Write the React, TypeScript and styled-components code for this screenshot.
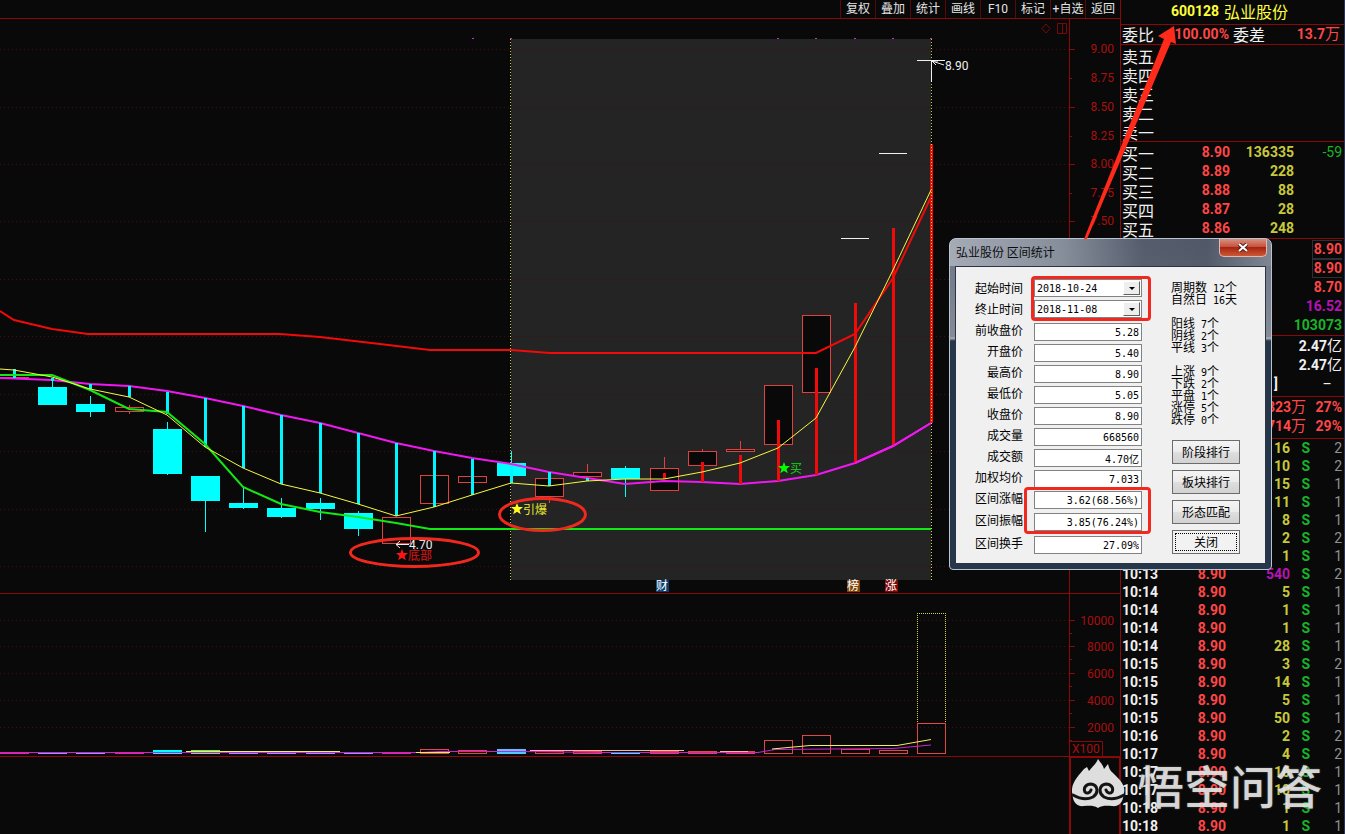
import React from "react";
import styled, { createGlobalStyle, css } from "styled-components";

const LINE = "#8a0808";
const AXIS = "#a80f0f";
const RED = "#ff4646";
const YELLOW = "#c8c83c";
const GREEN = "#18b428";
const PURPLE = "#b414b4";
const CJK = '"Noto Sans CJK SC", sans-serif';

const GlobalStyle = createGlobalStyle`
  * { box-sizing: border-box; }
  body { margin: 0; background: #090909; overflow: hidden; }
`;

const Screen = styled.div`
  position: relative;
  display: grid;
  grid-template-columns: minmax(0, 1fr) 225px;
  height: 100vh;
  overflow: hidden;
  background: #090909;
  color: #f0f0f0;
  font-family: Roboto, ${CJK};
  font-size: 14px;
`;

/* ---------- chart side ---------- */

const ChartSide = styled.main`
  display: flex;
  flex-direction: column;
  min-width: 0;
`;

const Toolbar = styled.nav`
  display: flex;
  justify-content: flex-end;
  height: 19px;
  flex: none;
  border-bottom: 1px solid ${LINE};
`;

const ToolButton = styled.button`
  width: 35px;
  padding: 0;
  border: 0;
  border-left: 1px solid #5a0808;
  background: none;
  color: #e4e4e4;
  font: 12px/16px Roboto, ${CJK};
  white-space: nowrap;
`;

const Plot = styled.svg`
  display: block;
  width: 100%;
  flex: none;
  font-family: Roboto, ${CJK};
  font-size: 12px;
`;

const Footer = styled.div`
  display: grid;
  grid-template-columns: 1fr 51px;
  flex: 1;
  min-height: 0;
`;

const FooterCell = styled.div`
  border: 0 solid ${LINE};
  border-width: 1px 1px 0 2px;
`;

/* ---------- quote side ---------- */

const QuoteSide = styled.aside`
  display: flex;
  flex-direction: column;
  min-width: 0;
  border-left: 1px solid ${LINE};
  border-right: 1px solid #2c3654;
`;

const Title = styled.h1`
  display: flex;
  justify-content: center;
  gap: 5px;
  margin: 0;
  padding-right: 6px;
  height: 25px;
  flex: none;
  border-bottom: 1px solid ${LINE};
  color: #ffff38;
  font-size: 14px;
  line-height: 23px;
`;

const Cjk = styled.span`
  display: block;
  font: 16px/18px ${CJK};
`;

const TitleName = styled(Cjk)`
  line-height: 22px;
`;

const Ratio = styled.div`
  display: grid;
  grid-template-columns: 32px 1fr 32px 1fr;
  column-gap: 4px;
  height: 20px;
  flex: none;
  padding: 0 4px 0 1px;
  border-bottom: 1px solid ${LINE};
  line-height: 19px;
`;

const Num = styled.span`
  color: ${RED};
  font-weight: 700;
  text-align: right;
  white-space: nowrap;
`;

const Table = styled.table<{ $rows: number; $top?: number; $bottom?: number; $last?: boolean }>`
  width: 100%;
  flex: none;
  border-collapse: separate;
  border-spacing: 0;
  table-layout: fixed;
  padding: ${(p) => p.$top || 0}px 0 ${(p) => p.$bottom || 0}px;
  ${(p) => !p.$last && css`border-bottom: 1px solid ${LINE};`}
  td {
    height: ${(p) => p.$rows}px;
    padding: 0;
    line-height: 17px;
    white-space: nowrap;
    overflow: hidden;
  }
`;

const Cell = styled.td<{ $c?: string; $plain?: boolean; $left?: boolean; $end?: boolean }>`
  color: ${(p) => p.$c || "#f0f0f0"};
  font-weight: ${(p) => (p.$plain ? 400 : 700)};
  text-align: ${(p) => (p.$left ? "left" : "right")};
  && { padding-left: ${(p) => (p.$left ? 1 : 0)}px; padding-right: ${(p) => (p.$end ? 2 : 0)}px; }
`;

const Unit = styled.span`
  font-size: 15px;
  font-weight: 400;
`;

const Boxed = styled.span`
  display: block;
  width: 30px;
  margin-left: auto;
  border: 1px solid #2e2e34;
  border-width: 1px 0 1px 1px;
`;

/* ---------- statistics dialog ---------- */

const Dialog = styled.section`
  position: absolute;
  top: 238px;
  right: 73px;
  width: 323px;
  height: 332px;
  display: flex;
  flex-direction: column;
  padding: 0 5px 5px;
  border: 1px solid #b9c4d0;
  border-radius: 7px 7px 4px 4px;
  background:
    linear-gradient(90deg, rgba(168, 174, 184, 0.95) 0, rgba(140, 148, 160, 0.8) 35%, rgba(70, 78, 96, 0.6) 60%, rgba(52, 60, 78, 0.5) 80%, rgba(130, 138, 150, 0.8) 100%) 0 0 / 100% 27px no-repeat,
    linear-gradient(180deg, #6c7482 0, #858c98 98px, #b4bac2 99px, #27374b 102px, #27374b 100%);
  color: #000;
`;

const DialogBar = styled.header`
  display: flex;
  justify-content: space-between;
  height: 27px;
  flex: none;
`;

const DialogTitle = styled.h2`
  margin: 0;
  padding-left: 1px;
  font: 12px/26px ${CJK};
  color: #0c0c10;
`;

const CloseButton = styled.button`
  display: grid;
  place-items: center;
  width: 48px;
  height: 18px;
  margin-right: -1px;
  padding: 0;
  border: 1px solid #e4b8ae;
  border-top: 0;
  border-radius: 0 0 5px 5px;
  background: linear-gradient(#d8907e 0, #c4523e 46%, #a82410 50%, #cc5836 100%);
`;

const DialogBody = styled.div`
  display: grid;
  grid-template-columns: 186px 1fr;
  column-gap: 12px;
  flex: 1;
  padding-top: 12px;
  border: 1px solid #2a3442;
  background: #f0f0f0;
  font: 12px/18px ${CJK};
`;

const Fields = styled.div`
  display: flex;
  flex-direction: column;
`;

const Field = styled.label<{ $gap: number; $line: number }>`
  display: grid;
  grid-template-columns: 67px 108px;
  column-gap: 11px;
  height: 18px;
  margin-bottom: ${(p) => p.$gap}px;
  line-height: ${(p) => p.$line}px;
  text-align: right;
`;

const mono = css`
  font: 10px/16px "DejaVu Sans Mono", "Noto Sans CJK SC", monospace;
`;

const ValueBox = styled.input`
  width: 108px;
  height: 18px;
  padding: 1px 2px 0 0;
  border: 1px solid #828282;
  border-radius: 0;
  background: #fff;
  color: #000;
  text-align: right;
  ${mono}
`;

const SelectWrap = styled.span`
  display: grid;
  grid-template-columns: 1fr 18px;
  align-items: center;
  height: 18px;
  border: 1px solid #828282;
  background: #fff;
`;

const DateSelect = styled.select`
  grid-area: 1 / 1 / 2 / 3;
  width: 100%;
  height: 16px;
  padding: 1px 0 0 2px;
  appearance: none;
  border: 0;
  border-radius: 0;
  background: none;
  color: #000;
  ${mono}
`;

const Drop = styled.span`
  grid-area: 1 / 2;
  display: grid;
  place-items: center;
  width: 17px;
  height: 14px;
  border: 1px solid #fff;
  border-right-color: #606060;
  border-bottom-color: #606060;
  background: #eee;
  pointer-events: none;
  &::after {
    content: "";
    border: 3px solid transparent;
    border-top-color: #000;
    border-bottom: 0;
  }
`;

const Summary = styled.div`
  padding: 2px 0 0 17px;
`;

const SummaryGroup = styled.div`
  margin-bottom: 12px;
`;

const SummaryLine = styled.p`
  margin: 0;
  line-height: 12px;
  height: 12px;
  white-space: pre;
`;

const Count = styled.span`
  font: 10px/12px "DejaVu Sans Mono", monospace;
`;

const Actions = styled.div`
  display: flex;
  flex-direction: column;
  gap: 6px;
  padding: 3px 0 0 1px;
`;

const ActionButton = styled.button<{ $focus?: boolean }>`
  width: 68px;
  height: 24px;
  padding: 0;
  border: 1px solid #6c6c6c;
  border-radius: 0;
  background: linear-gradient(#f4f4f4 0, #ececec 48%, #dedede 52%, #d2d2d2 100%);
  color: #000;
  font: 12px/20px ${CJK};
  ${(p) => p.$focus && css`
    background: #f2f2f2;
    outline: 1px dotted #000;
    outline-offset: -4px;
  `}
`;

const Highlight = styled.div<{ $top: number; $left: number; $w: number; $h: number }>`
  position: absolute;
  top: ${(p) => p.$top}px;
  left: ${(p) => p.$left}px;
  width: ${(p) => p.$w}px;
  height: ${(p) => p.$h}px;
  border: 3px solid #f0281e;
  border-radius: 4px;
  pointer-events: none;
`;

const Arrow = styled.svg`
  position: absolute;
  top: 24px;
  right: 165px;
  pointer-events: none;
`;

const Watermark = styled.div`
  position: absolute;
  top: 757px;
  right: 23px;
  display: flex;
  align-items: center;
  gap: 13px;
  color: rgba(232, 232, 232, 0.88);
  font: 500 46px/54px ${CJK};
  pointer-events: none;
  text-shadow: 0 0 2px rgba(150, 150, 150, 0.6);
`;

/* ---------- data ---------- */

const tools = ["复权", "叠加", "统计", "画线", "F10", "标记", "+自选", "返回"];

const sells = ["卖五", "卖四", "卖三", "卖二", "卖一"];
const buys = [
  ["买一", "8.90", "136335", "-59"],
  ["买二", "8.89", "228", ""],
  ["买三", "8.88", "88", ""],
  ["买四", "8.87", "28", ""],
  ["买五", "8.86", "248", ""],
];

const ticks: [string, string, string][] = [
  ["", "16", "2"], ["", "10", "2"], ["", "15", "1"], ["", "11", "1"], ["", "8", "1"],
  ["", "2", "2"], ["", "1", "1"], ["10:13", "540", "2"], ["10:14", "5", "1"],
  ["10:14", "1", "1"], ["10:14", "1", "1"], ["10:14", "28", "1"], ["10:15", "3", "2"],
  ["10:15", "14", "1"], ["10:15", "5", "1"], ["10:15", "50", "1"], ["10:16", "2", "2"],
  ["10:17", "4", "2"], ["10:17", "10", "1"], ["10:17", "10", "1"], ["10:18", "1", "1"],
  ["10:18", "1", "1"],
];

const fields: [string, string, number][] = [
  ["前收盘价", "5.28", 3], ["开盘价", "5.40", 3], ["最高价", "8.90", 3], ["最低价", "5.05", 3],
  ["收盘价", "8.90", 3], ["成交量", "668560", 3], ["成交额", "4.70亿", 3], ["加权均价", "7.033", 3],
  ["区间涨幅", "3.62(68.56%)", 4], ["区间振幅", "3.85(76.24%)", 5], ["区间换手", "27.09%", 0],
];

const summary = [
  [["周期数", " 12", "个"], ["自然日", " 16", "天"]],
  [["阳线", " 7", "个"], ["阴线", " 2", "个"], ["平线", " 3", "个"]],
  [["上涨", " 9", "个"], ["下跌", " 2", "个"], ["平盘", " 1", "个"], ["涨停", " 5", "个"], ["跌停", " 0", "个"]],
];

// x centre, body top, body bottom, wick top, wick bottom
type Candle = [number, number, number, number, number];
const falling: Candle[] = [
  [52, 387, 405, 378, 405], [90, 404, 412, 396, 417], [167, 429, 474, 422, 475],
  [205, 476, 501, 476, 532], [243, 503, 508, 488, 509], [281, 508, 517, 498, 518],
  [320, 503, 509, 498, 520], [358, 513, 529, 511, 536], [511, 463, 476, 451, 478],
  [625, 468, 479, 466, 497],
];
const rising: Candle[] = [
  [129, 407, 411, 405, 414], [396, 517, 543, 517, 543], [434, 475, 503, 475, 503],
  [472, 476, 482, 472, 486], [549, 478, 496, 478, 503], [587, 472, 476, 464, 476],
  [664, 468, 490, 457, 490], [702, 451, 465, 449, 465], [740, 449, 451, 441, 451],
  [778, 385, 444, 385, 444], [816, 315, 392, 315, 392],
];
const coolBars = [
  [14, 369, 378], [52, 378, 381], [90, 384, 389], [129, 386, 397], [167, 392, 414],
  [205, 398, 447], [243, 406, 468], [281, 415, 484], [320, 423, 493], [358, 433, 504],
  [396, 443, 516], [434, 451, 507], [472, 459, 495], [511, 466, 483], [549, 472, 486],
  [587, 478, 481],
];
const hotBars = [
  [664, 473, 479], [702, 462, 482], [740, 455, 484], [778, 420, 481], [816, 368, 475],
  [855, 303, 463], [893, 228, 446], [931, 144, 423],
];
const redLine = "0,311 14,320 52,329 88,334 280,334 320,337 380,344 430,350 511,350 550,353 816,353 855,334 893,278 931,197";
const yellowLine = "0,369 14,370 52,377 90,389 129,397 167,415 205,447 243,468 281,484 320,493 358,504 396,516 434,507 472,495 511,483 549,486 587,481 625,479 664,479 702,472 740,463 778,448 816,418 855,347 893,270 931,190";
const magentaLine = "0,378 52,380 90,384 129,386 167,391 205,398 243,406 281,415 320,423 358,433 396,443 434,451 472,458 511,464 549,472 587,478 625,484 664,481 702,482 740,484 778,481 816,475 855,463 893,446 931,423";
const greenLine = "0,375 52,375 90,390 129,409 167,412 205,444 243,487 281,504 320,512 358,517 396,523 430,529 931,529";

const priceTicks: [number, string][] = [
  [49, "9.00"], [78, "8.75"], [107, "8.50"], [136, "8.25"], [164, "8.00"], [193, "7.75"], [221, "7.50"],
];
const gridRows = [49, 107, 164, 221, 279, 336, 394, 451, 509, 566];
const volumeTicks: [number, string][] = [
  [620, "10000"], [646, "8000"], [673, "6000"], [700, "4000"], [727, "2000"],
];
const volumeCandles: [number, number, string][] = [
  [14, 752, "#e0289a"], [52, 752, "#8c9cff"], [90, 752, "#8c9cff"], [129, 752, "#e0289a"],
  [167, 750, "#00ffff"], [205, 750, "#6ee86e"], [243, 752, "#8c9cff"], [281, 752, "#8c9cff"],
  [320, 752, "#8c9cff"], [358, 752, "#8c9cff"], [396, 752, "#e0289a"], [511, 749, "#50c8ff"],
  [625, 752, "#00ffff"],
];
const volumeHollow = [
  [434, 749], [472, 750], [549, 751], [587, 751], [664, 751], [702, 751], [740, 751],
  [778, 740], [816, 735], [855, 749], [893, 750], [931, 723],
];

const starPath = "M0,-6 L1.6,-1.9 6,-1.9 2.5,0.9 3.8,5.3 0,2.7 -3.8,5.3 -2.5,0.9 -6,-1.9 -1.6,-1.9Z";

/* ---------- drawings ---------- */

const PriceChart = () => (
  <Plot viewBox="0 19 1120 575" role="img" aria-label="K线图">
    <rect x="511" y="39" width="420" height="541" fill="#242424" />
    {gridRows.map((y) => (
      <path key={y} d={`M0 ${y + 0.5}H1069`} stroke="#400c0c" strokeDasharray="1 3" />
    ))}
    <path d="M1069.5 19V593" stroke={LINE} />
    {gridRows.map((y) => (
      <path key={y} d={`M1070 ${y + 0.5}h5M1070 ${y + 29.5}h2`} stroke={LINE} />
    ))}
    {priceTicks.map(([y, t]) => (
      <text key={t} x="1114" y={y + 4} textAnchor="end" fill={AXIS}>{t}</text>
    ))}
    <path d="M1046 24l4 4.5-4 4.5-4-4.5zM1057.500 23.500h9v10h-9zM1062.500 23.500v10" fill="none" stroke="#7a0808" />
    {[473, 511, 778, 816, 855, 893, 931].map((x) => (
      <rect key={x} x={x - 1} y="38" width="2" height="1" fill="#c832c8" />
    ))}
    <path d="M510.500 39V580M931.500 39V144" stroke="#c8c83c" strokeDasharray="1 2" />

    {rising.map(([x, t, b, wt, wb]) => (
      <g key={x} stroke="#e04040" fill="#090909">
        <path d={`M${x + 0.5} ${wt}V${t}M${x + 0.5} ${b}V${wb}`} />
        <rect x={x - 13.5} y={t + 0.5} width="28" height={b - t} />
      </g>
    ))}
    <path d="M0 377.500H29" stroke="#e04040" />
    {falling.map(([x, t, b, wt, wb]) => (
      <g key={x} fill="#00ffff">
        <rect x={x} y={wt} width="1" height={wb - wt} />
        <rect x={x - 14} y={t} width="29" height={b - t} />
      </g>
    ))}
    <polyline points={magentaLine} fill="none" stroke="#f018f0" strokeWidth="2" />
    {coolBars.map(([x, t, b]) => (
      <rect key={x} x={x - 1} y={t} width="3" height={b - t} fill="#00f6ff" />
    ))}
    {hotBars.map(([x, t, b]) => (
      <rect key={x} x={x - 1} y={t} width="3" height={b - t} fill="#f00a0a" />
    ))}
    <polyline points={greenLine} fill="none" stroke="#14e814" strokeWidth="2" />
    <polyline points={redLine} fill="none" stroke="#f00a0a" strokeWidth="2" />
    <polyline points={yellowLine} fill="none" stroke="#f8f840" />
    <polyline points="855,463 893,446 931,423" fill="none" stroke="#f018f0" strokeWidth="2" />
    <path d="M931.500 144V580" stroke="#d8d850" strokeDasharray="1 2" />

    <path d="M841 238.500h28M879 153.500h28M917 60.500h28M931.500 60V82M932 61l12 4M932 61l6 0M932 61l4 4" stroke="#f0f0f0" fill="none" />
    <text x="945" y="70" fill="#f0f0f0">8.90</text>
    <path d="M409 544.500H396M400 541l-4 3.500 4 3.500" stroke="#f0f0f0" fill="none" />
    <text x="409" y="549" fill="#f0f0f0">4.70</text>

    <path transform="translate(402 555)" d={starPath} fill="#ff1414" />
    <text x="408" y="560" fill="#e01414">底部</text>
    <path transform="translate(517 509)" d={starPath} fill="#ffff20" />
    <text x="523" y="514" fill="#e8e830">引爆</text>
    <path transform="translate(784 468)" d={starPath} fill="#00ff00" />
    <text x="790" y="473" fill="#10d810">买</text>

    <g fill="none" stroke="#f0281e" strokeWidth="3">
      <ellipse cx="414.500" cy="552.500" rx="64" ry="14" />
      <ellipse cx="542.500" cy="514.500" rx="43" ry="16" />
    </g>

    <rect x="656" y="580" width="13" height="12" fill="#0c3c6c" />
    <rect x="847" y="580" width="13" height="12" fill="#7c4408" />
    <rect x="885" y="580" width="13" height="12" fill="#7c0808" />
    <g fill="#fff">
      <text x="656" y="590">财</text>
      <text x="847" y="590">榜</text>
      <text x="885" y="590">涨</text>
    </g>
    <path d="M0 593.500H1120" stroke={LINE} />
  </Plot>
);

const VolumeChart = () => (
  <Plot viewBox="0 594 1120 163" role="img" aria-label="成交量">
    {volumeTicks.map(([y, t]) => (
      <g key={t}>
        <path d={`M0 ${y + 0.5}H1069`} stroke="#400c0c" strokeDasharray="1 3" />
        <path d={`M1070 ${y + 0.5}h5M1070 ${y + 13.5}h2`} stroke={LINE} />
        <text x="1114" y={y + 5} textAnchor="end" fill={AXIS}>{t}</text>
      </g>
    ))}
    <path d="M1069.500 594V757M1070 741.500h32.500V756" fill="none" stroke={LINE} />
    <text x="1072" y="753" fill={AXIS}>X100</text>
    {volumeCandles.map(([x, y, c]) => (
      <rect key={x} x={x - 14} y={y} width="29" height={754 - y} fill={c} />
    ))}
    {volumeHollow.map(([x, y]) => (
      <rect key={x} x={x - 13.5} y={y + 0.5} width="28" height={753 - y} fill="none" stroke="#e04848" />
    ))}
    <path d="M917.500 613V723M917 613.500H946M945.500 613V723" fill="none" stroke="#d0d040" strokeDasharray="1 1" />
    <path d="M0 752.500H420L440 751.500H520L600 752.500H758L775 749.500 893 748.500 931 745" fill="none" stroke="#d020d0" />
    <path d="M186 751.500H340M530 750.500H684M720 751.500H748" fill="none" stroke="#f8b0b0" />
    <path d="M186 751.500H340M416 752.500H450M772 749L810 745.500H897L931 739.500" fill="none" stroke="#f0f060" />
    <path d="M0 756.500H1120" stroke={LINE} />
  </Plot>
);

const MonkeyMark = () => (
  <svg width="53" height="50" viewBox="0 0 53 50" aria-hidden="true">
    <path
      fill="#dedede"
      d="M0 33C-1 24 7 16 12 10l3-2 2 4C20 8 24 5 26 0c2 3 5 6 6 10l4-5c1 4 2 7 5 9 6 6 13 12 11 20l-1 5c-1 5-5 9-11 8-5 0-9-1-14 2-5-3-9-2-14-2C6 48 2 44 1 39z"
    />
    <g fill="none" stroke="#141414" strokeWidth="3" strokeLinecap="round">
      <path d="M1 36c7 4 14 5 20 2 6-4 5-12-2-13-5 0-8 4-6 8 2 2 5 1 6-2" />
      <path d="M52 36c-7 4-14 5-20 2-6-4-5-12 2-13 5 0 8 4 6 8-2 2-5 1-6-2" />
    </g>
  </svg>
);

/* ---------- page ---------- */

const StatsDialog = () => (
  <Dialog role="dialog" aria-labelledby="stats-title">
    <DialogBar>
      <DialogTitle id="stats-title">弘业股份 区间统计</DialogTitle>
      <CloseButton aria-label="关闭窗口">
        <svg width="12" height="9" viewBox="0 0 12 9" aria-hidden="true">
          <path d="M2 1l8 7M10 1L2 8" stroke="#5a2018" strokeWidth="4" />
          <path d="M2 1l8 7M10 1L2 8" stroke="#fff" strokeWidth="2" />
        </svg>
      </CloseButton>
    </DialogBar>
    <DialogBody>
      <Fields>
        {[["起始时间", "2018-10-24", 3], ["终止时间", "2018-11-08", 5]].map(([l, v, g]) => (
          <Field key={l} $gap={g as number} $line={18}>
            {l}
            <SelectWrap>
              <DateSelect defaultValue={v}><option>{v}</option></DateSelect>
              <Drop />
            </SelectWrap>
          </Field>
        ))}
        {fields.map(([l, v, g]) => (
          <Field key={l} $gap={g} $line={14}>
            {l}
            <ValueBox readOnly value={v} />
          </Field>
        ))}
      </Fields>
      <Summary>
        {summary.map((group, i) => (
          <SummaryGroup key={i}>
            {group.map(([name, n, unit]) => (
              <SummaryLine key={name}>{name}<Count>{n}</Count>{unit}</SummaryLine>
            ))}
          </SummaryGroup>
        ))}
        <Actions>
          <ActionButton>阶段排行</ActionButton>
          <ActionButton>板块排行</ActionButton>
          <ActionButton>形态匹配</ActionButton>
          <ActionButton $focus>关闭</ActionButton>
        </Actions>
      </Summary>
    </DialogBody>
    <Highlight $top={37} $left={81} $w={120} $h={45} />
    <Highlight $top={248} $left={74} $w={127} $h={47} />
  </Dialog>
);

export default function App() {
  return (
    <>
      <GlobalStyle />
      <Screen>
        <ChartSide>
          <Toolbar>
            {tools.map((t) => <ToolButton key={t}>{t}</ToolButton>)}
          </Toolbar>
          <PriceChart />
          <VolumeChart />
          <Footer><span /><FooterCell /></Footer>
        </ChartSide>

        <QuoteSide>
          <Title>600128 <TitleName>弘业股份</TitleName></Title>
          <Ratio>
            <Cjk>委比</Cjk>
            <Num>100.00%</Num>
            <Cjk>委差</Cjk>
            <Num>13.7<Unit>万</Unit></Num>
          </Ratio>

          <Table $rows={19} $top={1}>
            <tbody>
              {sells.map((s) => (
                <tr key={s}><Cell $left $plain><Cjk>{s}</Cjk></Cell></tr>
              ))}
            </tbody>
          </Table>

          <Table $rows={19} $top={1}>
            <colgroup><col width="50" /><col width="59" /><col width="64" /><col /></colgroup>
            <tbody>
              {buys.map(([n, p, v, d]) => (
                <tr key={n}>
                  <Cell $left $plain><Cjk>{n}</Cjk></Cell>
                  <Cell $c={RED}>{p}</Cell>
                  <Cell $c={YELLOW}>{v}</Cell>
                  <Cell $c={GREEN} $plain $end>{d}</Cell>
                </tr>
              ))}
            </tbody>
          </Table>

          <Table $rows={19} $top={1}>
            <tbody>
              <tr><Cell $end $c={RED}><Boxed>8.90</Boxed></Cell></tr>
              <tr><Cell $end $c={RED}><Boxed>8.90</Boxed></Cell></tr>
              <tr><Cell $end $c={RED}>8.70</Cell></tr>
              <tr><Cell $end $c={PURPLE}>16.52</Cell></tr>
              <tr><Cell $end $c={GREEN}>103073</Cell></tr>
            </tbody>
          </Table>

          <Table $rows={19} $top={1} $bottom={2}>
            <colgroup><col width="157" /><col /></colgroup>
            <tbody>
              <tr><Cell /><Cell $end>2.47<Unit>亿</Unit></Cell></tr>
              <tr><Cell /><Cell $end>2.47<Unit>亿</Unit></Cell></tr>
              <tr><Cell>]</Cell><Cell $end $plain>–&nbsp;&nbsp;&nbsp;</Cell></tr>
            </tbody>
          </Table>

          <Table $rows={19} $top={1} $bottom={2}>
            <colgroup><col width="185" /><col /></colgroup>
            <tbody>
              <tr><Cell $c={RED}>323<Unit>万</Unit></Cell><Cell $end $c={RED}>27%</Cell></tr>
              <tr><Cell $c={RED}>714<Unit>万</Unit></Cell><Cell $end $c={RED}>29%</Cell></tr>
            </tbody>
          </Table>

          <Table $rows={18} $last>
            <colgroup><col width="50" /><col width="55" /><col width="64" /><col width="20" /><col /></colgroup>
            <tbody>
              {ticks.map(([time, v, n], i) => (
                <tr key={i}>
                  <Cell $left>{time}</Cell>
                  <Cell $c={RED}>{time && "8.90"}</Cell>
                  <Cell $c={v === "540" ? PURPLE : YELLOW}>{v}</Cell>
                  <Cell $c={GREEN}>S</Cell>
                  <Cell $c="#909090" $plain $end>{n}</Cell>
                </tr>
              ))}
            </tbody>
          </Table>
        </QuoteSide>

        <StatsDialog />
        <Arrow width="96" height="216" viewBox="1084 24 96 216" aria-hidden="true">
          <path d="M1084 239L1164 39 1158 36 1174 26 1176 44 1171 42 1087 239z" fill="#ff2a1a" />
        </Arrow>
        <Watermark><MonkeyMark />悟空问答</Watermark>
      </Screen>
    </>
  );
}
